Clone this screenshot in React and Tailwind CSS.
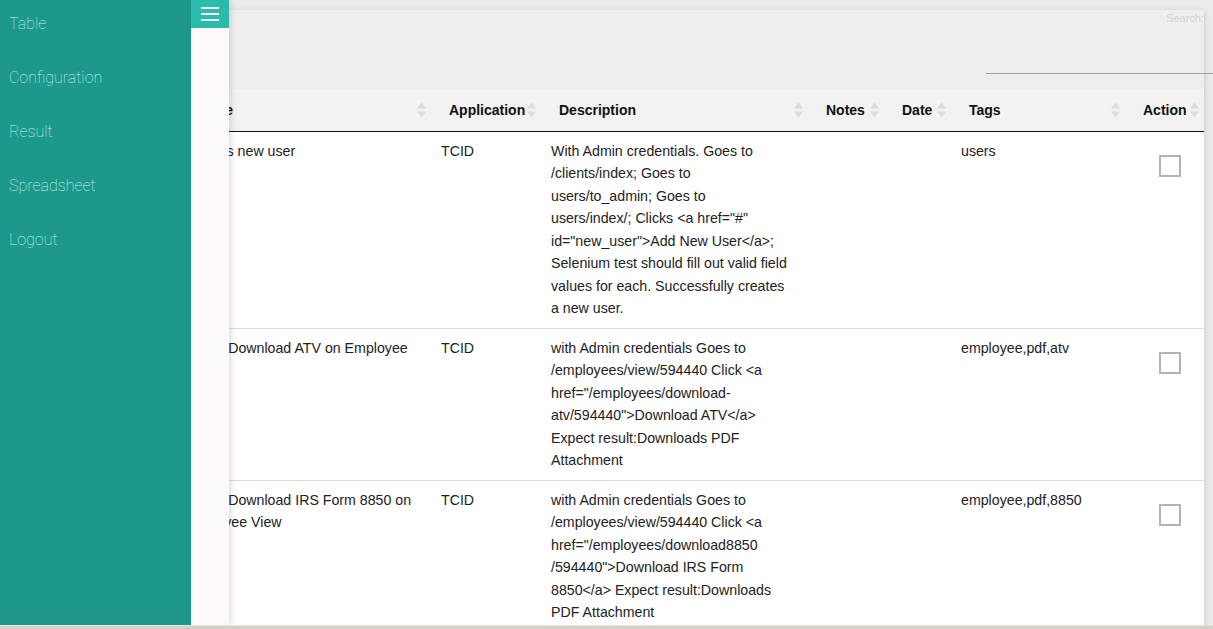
import React from 'react';

const columns = [
  { key: 'name', label: 'Name', width: 'w-[254px]' },
  { key: 'app', label: 'Application', width: 'w-[110px]' },
  { key: 'desc', label: 'Description', width: 'w-[267px]' },
  { key: 'notes', label: 'Notes', width: 'w-[76px]' },
  { key: 'date', label: 'Date', width: 'w-[67px]' },
  { key: 'tags', label: 'Tags', width: 'w-[174px]' },
  { key: 'action', label: 'Action', width: 'w-[79px]' },
];

const tests = [
  {
    id: 1,
    name: 'Creates new user',
    app: 'TCID',
    desc: [
      'With Admin credentials. Goes to',
      '/clients/index; Goes to',
      'users/to_admin; Goes to',
      'users/index/; Clicks <a href="#"',
      'id="new_user">Add New User</a>;',
      'Selenium test should fill out valid field',
      'values for each. Successfully creates',
      'a new user.',
    ],
    tags: 'users',
  },
  {
    id: 2,
    name: 'Check Download ATV on Employee',
    app: 'TCID',
    desc: [
      'with Admin credentials Goes to',
      '/employees/view/594440 Click <a',
      'href="/employees/download-',
      'atv/594440">Download ATV</a>',
      'Expect result:Downloads PDF',
      'Attachment',
    ],
    tags: 'employee,pdf,atv',
  },
  {
    id: 3,
    name: 'Check Download IRS Form 8850 on Employee View',
    app: 'TCID',
    desc: [
      'with Admin credentials Goes to',
      '/employees/view/594440 Click <a',
      'href="/employees/download8850',
      '/594440">Download IRS Form',
      '8850</a> Expect result:Downloads',
      'PDF Attachment',
    ],
    tags: 'employee,pdf,8850',
  },
];

const menu = ['Table', 'Configuration', 'Result', 'Spreadsheet', 'Logout'];

const SortIcon = () => (
  <svg
    className="absolute right-[5px] top-1/2 -translate-y-1/2"
    width="9"
    height="15"
    viewBox="0 0 9 15"
  >
    <polygon points="4.5,0 9,6 0,6" fill="#dcdcdc" />
    <polygon points="0,9 9,9 4.5,15" fill="#dcdcdc" />
  </svg>
);

export default function App() {
  return (
    <div className="relative h-[629px] w-[1213px] overflow-hidden bg-[#ebebeb]">
      {/* tarjeta con la tabla */}
      <div className="ml-[177px] mt-[10px] w-[1027px] bg-white font-['Liberation_Sans',Arial,sans-serif] shadow-[0_2px_6px_rgba(0,0,0,0.18)]">
        <div className="flex h-[79px] flex-col items-end bg-[#eeeeee]">
          <label className="mt-[1px] text-[11px] leading-[14px] text-[#d2d2d2]">Search:</label>
          <div className="mr-[-9px] mt-[48px] h-px w-[227px] bg-[#9e9e9e]" />
        </div>

        <table className="w-full table-fixed">
          <colgroup>
            {columns.map((c) => (
              <col key={c.key} className={c.width} />
            ))}
          </colgroup>
          <thead className="bg-[#f2f2f2]">
            <tr>
              {columns.map((c) => (
                <th
                  key={c.key}
                  className="relative h-[42px] border-b border-[#111] pl-[18px] pr-[18px] pt-[1px] text-left text-[14px] font-bold text-[#111]"
                >
                  {c.label}
                  <SortIcon />
                </th>
              ))}
            </tr>
          </thead>
          <tbody className="text-[14.2px] leading-[22.5px] text-[#222]">
            {tests.map((t) => (
              <tr key={t.id} className="border-b border-[#dddddd]">
                <td className="py-2 pl-[7px] pr-[10px] align-top">{t.name}</td>
                <td className="px-[10px] py-2 align-top">{t.app}</td>
                <td className="px-[10px] py-2 align-top">
                  {t.desc.map((line, i) => (
                    <div key={i}>{line}</div>
                  ))}
                </td>
                <td className="px-[10px] py-2 align-top"></td>
                <td className="px-[10px] py-2 align-top"></td>
                <td className="px-[10px] py-2 align-top">{t.tags}</td>
                <td className="py-2 pl-[34px] align-top">
                  <div className="mt-[15px] h-[22px] w-[22px] border-2 border-[#b3b3b3]" />
                </td>
              </tr>
            ))}
          </tbody>
        </table>
      </div>

      {/* menu lateral */}
      <nav className="absolute left-0 top-0 h-[625px] w-[191px] bg-[#1c998b] font-['Roboto',sans-serif]">
        {menu.map((item) => (
          <a
            key={item}
            href="#"
            className="block h-[54px] pl-[9px] text-[16px] font-thin leading-[48px] text-[#d2f0ec]"
          >
            {item}
          </a>
        ))}
      </nav>

      <div className="absolute left-[191px] top-0 h-[625px] w-[38px] bg-[#fdf9f8] shadow-[2px_0_6px_rgba(0,0,0,0.14)]">
        <button className="flex h-[28px] w-[38px] flex-col items-center justify-center gap-[4px] bg-[#2bbbad]">
          <span className="h-[2px] w-[18px] bg-white" />
          <span className="h-[2px] w-[18px] bg-white" />
          <span className="h-[2px] w-[18px] bg-white" />
        </button>
      </div>

      <div className="absolute bottom-0 left-0 h-[4px] w-full border-t border-[#e6e3de] bg-[#d4d0c8]" />
    </div>
  );
}
